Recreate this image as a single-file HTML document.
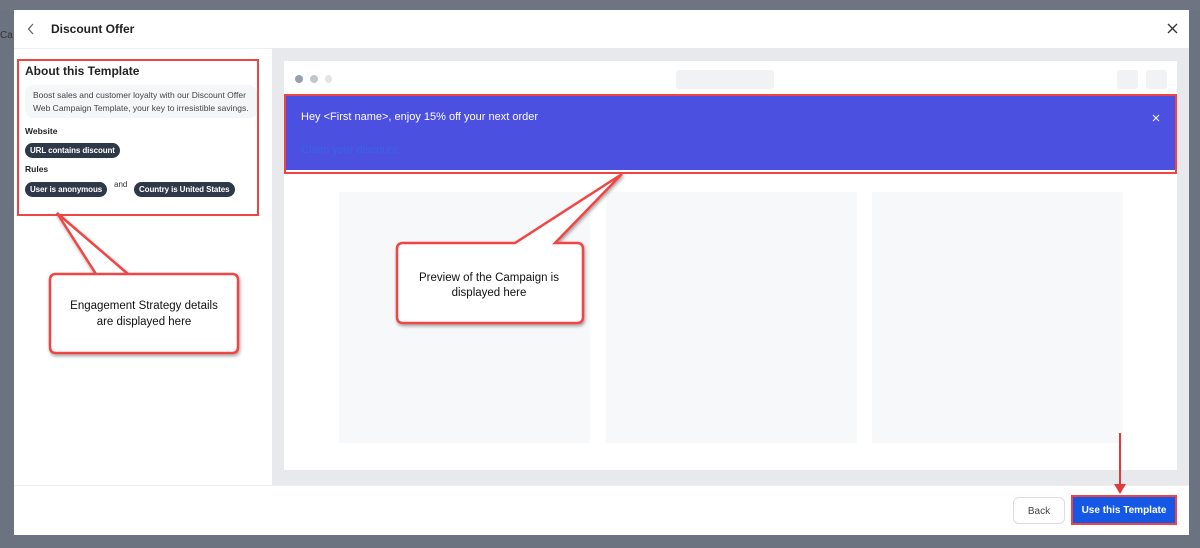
<!DOCTYPE html>
<html><head><meta charset="utf-8"><style>
*{box-sizing:border-box;margin:0;padding:0}
body{width:1200px;height:548px;background:#6b7280;font-family:"Liberation Sans",sans-serif;position:relative;overflow:hidden}
.abs{position:absolute}
.modal{left:14px;top:10px;width:1175px;height:525px;background:#fff}
.pill{display:inline-block;background:#2f3848;color:#fff;font-size:8px;font-weight:bold;padding:3px 5px;border-radius:8px;white-space:nowrap;letter-spacing:-0.1px}
</style></head><body>
<div class="abs" style="left:0;top:0;width:1200px;height:10px;background:#6e7480"></div>
<div class="abs" style="left:0;top:30px;width:14px;font-size:10px;color:#333;overflow:hidden">Ca</div>
<div class="abs modal"></div>
<svg class="abs" style="left:27px;top:23px" width="8" height="12"><path d="M6 1 L1.5 6 L6 11" fill="none" stroke="#666" stroke-width="1.3"/></svg>
<div class="abs" style="left:51px;top:22px;font-size:12px;font-weight:bold;color:#222">Discount Offer</div>
<svg class="abs" style="left:1167px;top:23px" width="11" height="11"><path d="M1 1 L10 10 M10 1 L1 10" stroke="#333" stroke-width="1.3"/></svg>
<div class="abs" style="left:14px;top:48px;width:1175px;height:1px;background:#eee"></div>
<!-- right panel -->
<div class="abs" style="left:272px;top:48px;width:917px;height:437px;background:#e8e9ed"></div>
<div class="abs" style="left:284px;top:61px;width:893px;height:409px;background:#fff"></div>
<div class="abs" style="left:295px;top:75px;width:8px;height:8px;border-radius:50%;background:#9aa0ab"></div>
<div class="abs" style="left:310px;top:75px;width:8px;height:8px;border-radius:50%;background:#c2c6cd"></div>
<div class="abs" style="left:325px;top:75px;width:7px;height:8px;border-radius:50%;background:#e2e4e8"></div>
<div class="abs" style="left:676px;top:70px;width:98px;height:19px;border-radius:3px;background:#f1f2f4"></div>
<div class="abs" style="left:1117px;top:70px;width:21px;height:19px;border-radius:3px;background:#f1f2f4"></div>
<div class="abs" style="left:1146px;top:70px;width:21px;height:19px;border-radius:3px;background:#f1f2f4"></div>
<div class="abs" style="left:284px;top:96px;width:893px;height:74px;background:#4b50e0"></div>
<div class="abs" style="left:301px;top:111px;font-size:11px;color:#fff">Hey &lt;First name&gt;, enjoy 15% off your next order</div>
<svg class="abs" style="left:1152px;top:114px" width="8" height="8"><path d="M1 1 L7 7 M7 1 L1 7" stroke="#fff" stroke-width="1"/></svg>
<div class="abs" style="left:301px;top:144px;font-size:11px;color:#3a63e8">Claim your discount</div>
<div class="abs" style="left:284px;top:94px;width:893px;height:80px;border:2px solid #f04444"></div>
<div class="abs" style="left:339px;top:192px;width:251px;height:251px;background:#f7f8fa"></div>
<div class="abs" style="left:606px;top:192px;width:251px;height:251px;background:#f7f8fa"></div>
<div class="abs" style="left:872px;top:192px;width:251px;height:251px;background:#f7f8fa"></div>
<!-- left -->
<div class="abs" style="left:25px;top:64px;font-size:12px;font-weight:bold;color:#222">About this Template</div>
<div class="abs" style="left:25px;top:85px;width:232px;height:33px;background:#f5f6f8;border-radius:8px;padding:4px 0 0 8px;font-size:8.5px;line-height:12.5px;color:#444;white-space:nowrap">Boost sales and customer loyalty with our Discount Offer<br>Web Campaign Template, your key to irresistible savings.</div>
<div class="abs" style="left:25px;top:126px;font-size:8.5px;font-weight:bold;color:#222">Website</div>
<div class="abs" style="left:25px;top:140px"><span class="pill">URL contains discount</span></div>
<div class="abs" style="left:25px;top:164px;font-size:8.5px;font-weight:bold;color:#222">Rules</div>
<div class="abs" style="left:25px;top:179px"><span class="pill">User is anonymous</span></div>
<div class="abs" style="left:114px;top:180px;font-size:8px;color:#333">and</div>
<div class="abs" style="left:134px;top:179px"><span class="pill">Country is United States</span></div>
<div class="abs" style="left:17px;top:59px;width:242px;height:157px;border:2px solid #f04444"></div>
<!-- footer -->
<div class="abs" style="left:14px;top:485px;width:1175px;height:1px;background:#eee"></div>
<div class="abs" style="left:1013px;top:497px;width:52px;height:27px;border:1px solid #ddd;border-radius:6px;font-size:10px;color:#444;text-align:center;line-height:27px">Back</div>
<div class="abs" style="left:1071px;top:495px;width:106px;height:30px;border:2px solid #f04444;background:#1558e6;color:#fff;font-size:10px;font-weight:bold;text-align:center;line-height:28px">Use this Template</div>
<svg class="abs" style="left:0;top:0" width="1200" height="548">
<defs><filter id="s"><feDropShadow dx="1" dy="2" stdDeviation="1.5" flood-opacity="0.35"/></filter></defs>
<path filter="url(#s)" d="M57 213 L96 274 H232 Q238 274 238 280 V347 Q238 353 232 353 H56 Q50 353 50 347 V280 Q50 274 56 274 H128 Z" fill="#fff" stroke="#f04444" stroke-width="2.5"/>
<path filter="url(#s)" d="M622 174 L515 243 H403 Q397 243 397 249 V317 Q397 323 403 323 H577 Q583 323 583 317 V249 Q583 243 577 243 H555 Z" fill="#fff" stroke="#f04444" stroke-width="2.5"/>
<text x="144" y="309" font-size="11.5" text-anchor="middle" fill="#111" font-family="Liberation Sans">Engagement Strategy details</text>
<text x="144" y="325" font-size="11.5" text-anchor="middle" fill="#111" font-family="Liberation Sans">are displayed here</text>
<text x="489" y="281" font-size="11.5" text-anchor="middle" fill="#111" font-family="Liberation Sans">Preview of the Campaign is</text>
<text x="489" y="296" font-size="11.5" text-anchor="middle" fill="#111" font-family="Liberation Sans">displayed here</text>
<line x1="1120" y1="433" x2="1120" y2="486" stroke="#e03a3a" stroke-width="2"/>
<path d="M1114 484 L1120 494 L1126 484 Z" fill="#e03a3a"/>
</svg>
</body></html>
